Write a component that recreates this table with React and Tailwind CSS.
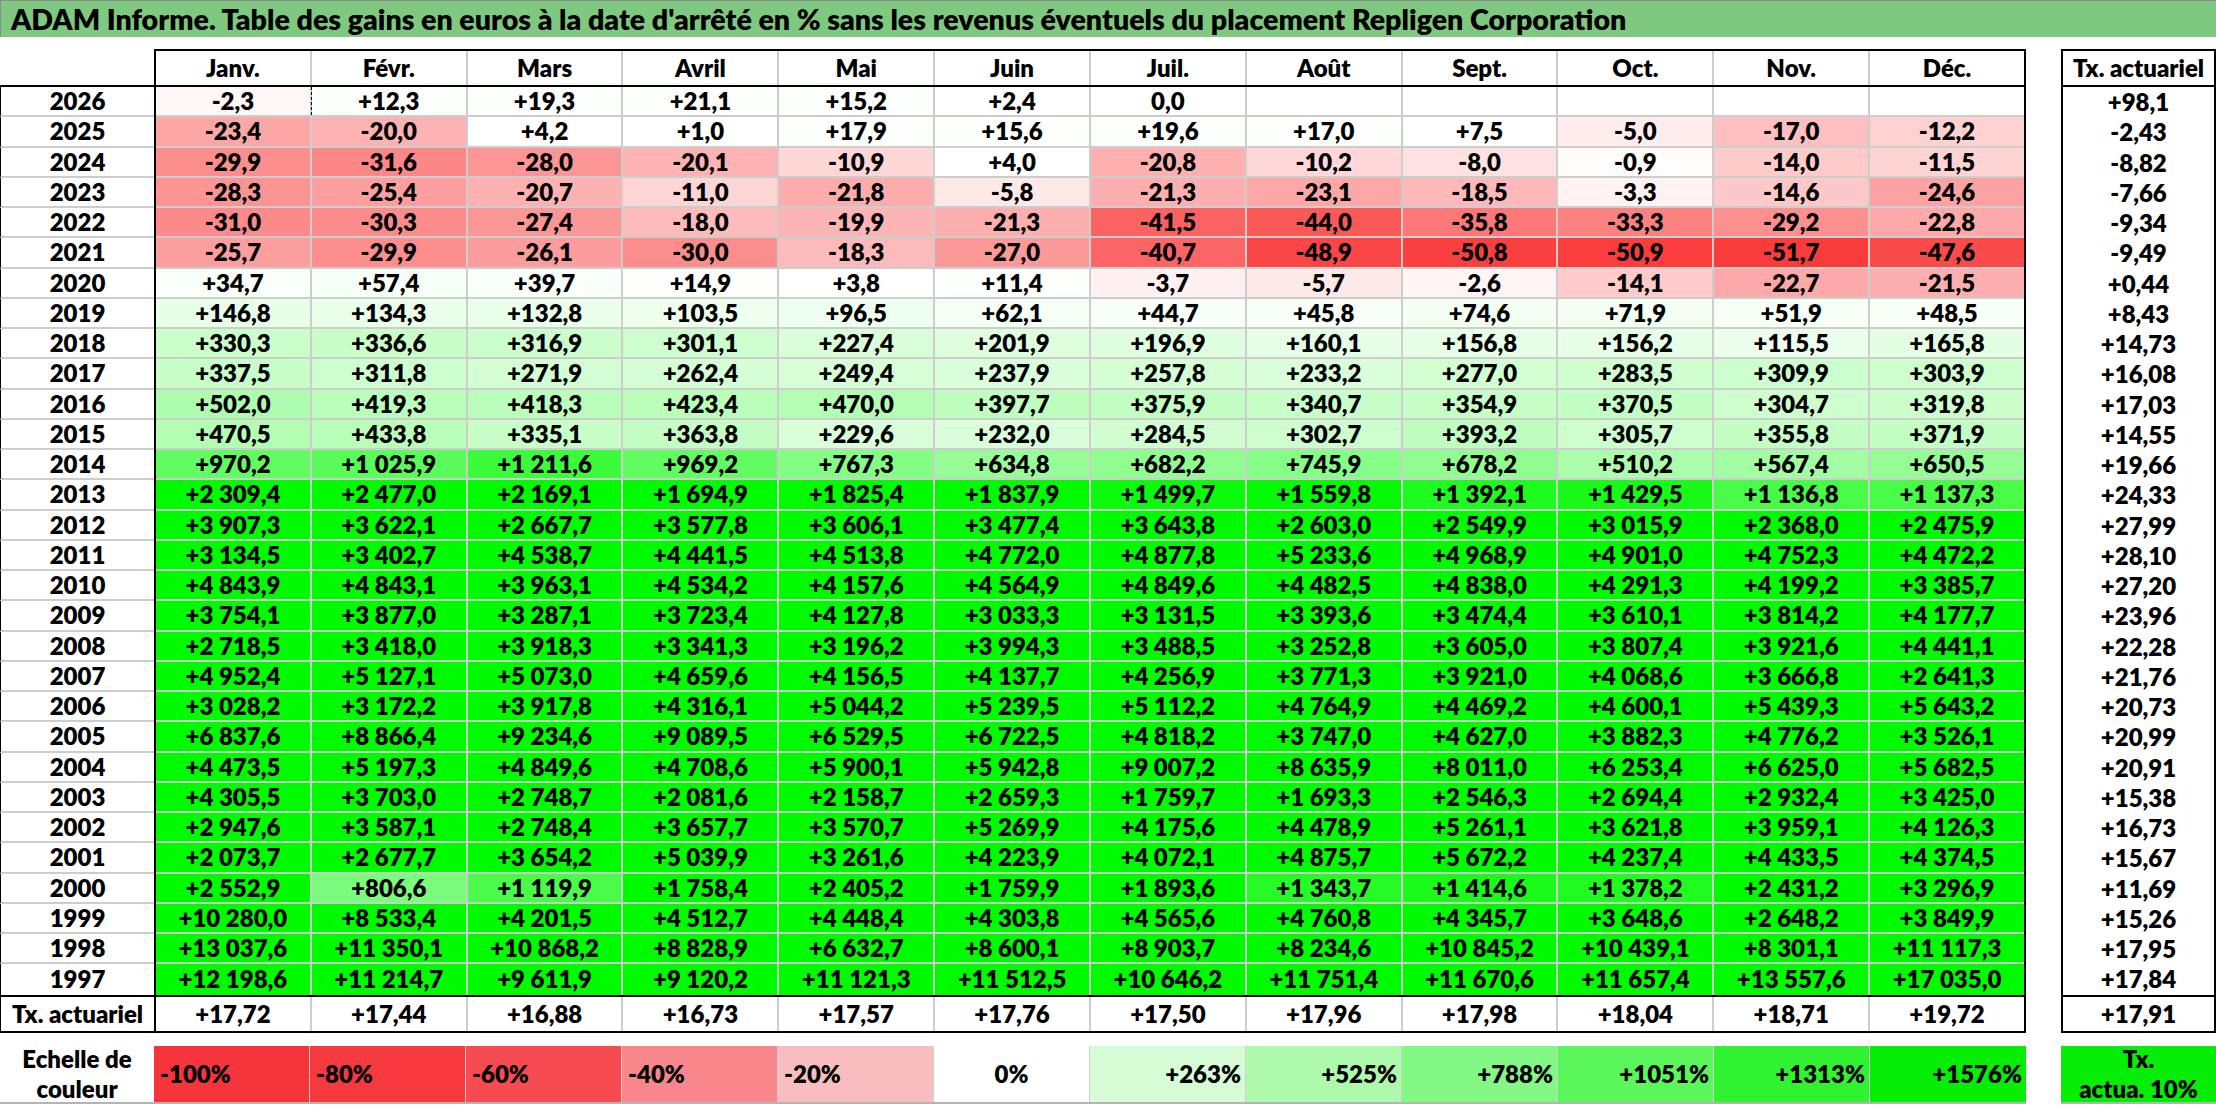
import React from 'react'

const MONTHS = ['Janv.', 'Févr.', 'Mars', 'Avril', 'Mai', 'Juin', 'Juil.', 'Août', 'Sept.', 'Oct.', 'Nov.', 'Déc.']

// année, 12 mois, taux actuariel
const ROWS = [
    ['2026', '-2,3 | +12,3 | +19,3 | +21,1 | +15,2 | +2,4 | 0,0 |  |  |  |  | ', '+98,1'],
    ['2025', '-23,4 | -20,0 | +4,2 | +1,0 | +17,9 | +15,6 | +19,6 | +17,0 | +7,5 | -5,0 | -17,0 | -12,2', '-2,43'],
    ['2024', '-29,9 | -31,6 | -28,0 | -20,1 | -10,9 | +4,0 | -20,8 | -10,2 | -8,0 | -0,9 | -14,0 | -11,5', '-8,82'],
    ['2023', '-28,3 | -25,4 | -20,7 | -11,0 | -21,8 | -5,8 | -21,3 | -23,1 | -18,5 | -3,3 | -14,6 | -24,6', '-7,66'],
    ['2022', '-31,0 | -30,3 | -27,4 | -18,0 | -19,9 | -21,3 | -41,5 | -44,0 | -35,8 | -33,3 | -29,2 | -22,8', '-9,34'],
    ['2021', '-25,7 | -29,9 | -26,1 | -30,0 | -18,3 | -27,0 | -40,7 | -48,9 | -50,8 | -50,9 | -51,7 | -47,6', '-9,49'],
    ['2020', '+34,7 | +57,4 | +39,7 | +14,9 | +3,8 | +11,4 | -3,7 | -5,7 | -2,6 | -14,1 | -22,7 | -21,5', '+0,44'],
    ['2019', '+146,8 | +134,3 | +132,8 | +103,5 | +96,5 | +62,1 | +44,7 | +45,8 | +74,6 | +71,9 | +51,9 | +48,5', '+8,43'],
    ['2018', '+330,3 | +336,6 | +316,9 | +301,1 | +227,4 | +201,9 | +196,9 | +160,1 | +156,8 | +156,2 | +115,5 | +165,8', '+14,73'],
    ['2017', '+337,5 | +311,8 | +271,9 | +262,4 | +249,4 | +237,9 | +257,8 | +233,2 | +277,0 | +283,5 | +309,9 | +303,9', '+16,08'],
    ['2016', '+502,0 | +419,3 | +418,3 | +423,4 | +470,0 | +397,7 | +375,9 | +340,7 | +354,9 | +370,5 | +304,7 | +319,8', '+17,03'],
    ['2015', '+470,5 | +433,8 | +335,1 | +363,8 | +229,6 | +232,0 | +284,5 | +302,7 | +393,2 | +305,7 | +355,8 | +371,9', '+14,55'],
    ['2014', '+970,2 | +1 025,9 | +1 211,6 | +969,2 | +767,3 | +634,8 | +682,2 | +745,9 | +678,2 | +510,2 | +567,4 | +650,5', '+19,66'],
    ['2013', '+2 309,4 | +2 477,0 | +2 169,1 | +1 694,9 | +1 825,4 | +1 837,9 | +1 499,7 | +1 559,8 | +1 392,1 | +1 429,5 | +1 136,8 | +1 137,3', '+24,33'],
    ['2012', '+3 907,3 | +3 622,1 | +2 667,7 | +3 577,8 | +3 606,1 | +3 477,4 | +3 643,8 | +2 603,0 | +2 549,9 | +3 015,9 | +2 368,0 | +2 475,9', '+27,99'],
    ['2011', '+3 134,5 | +3 402,7 | +4 538,7 | +4 441,5 | +4 513,8 | +4 772,0 | +4 877,8 | +5 233,6 | +4 968,9 | +4 901,0 | +4 752,3 | +4 472,2', '+28,10'],
    ['2010', '+4 843,9 | +4 843,1 | +3 963,1 | +4 534,2 | +4 157,6 | +4 564,9 | +4 849,6 | +4 482,5 | +4 838,0 | +4 291,3 | +4 199,2 | +3 385,7', '+27,20'],
    ['2009', '+3 754,1 | +3 877,0 | +3 287,1 | +3 723,4 | +4 127,8 | +3 033,3 | +3 131,5 | +3 393,6 | +3 474,4 | +3 610,1 | +3 814,2 | +4 177,7', '+23,96'],
    ['2008', '+2 718,5 | +3 418,0 | +3 918,3 | +3 341,3 | +3 196,2 | +3 994,3 | +3 488,5 | +3 252,8 | +3 605,0 | +3 807,4 | +3 921,6 | +4 441,1', '+22,28'],
    ['2007', '+4 952,4 | +5 127,1 | +5 073,0 | +4 659,6 | +4 156,5 | +4 137,7 | +4 256,9 | +3 771,3 | +3 921,0 | +4 068,6 | +3 666,8 | +2 641,3', '+21,76'],
    ['2006', '+3 028,2 | +3 172,2 | +3 917,8 | +4 316,1 | +5 044,2 | +5 239,5 | +5 112,2 | +4 764,9 | +4 469,2 | +4 600,1 | +5 439,3 | +5 643,2', '+20,73'],
    ['2005', '+6 837,6 | +8 866,4 | +9 234,6 | +9 089,5 | +6 529,5 | +6 722,5 | +4 818,2 | +3 747,0 | +4 627,0 | +3 882,3 | +4 776,2 | +3 526,1', '+20,99'],
    ['2004', '+4 473,5 | +5 197,3 | +4 849,6 | +4 708,6 | +5 900,1 | +5 942,8 | +9 007,2 | +8 635,9 | +8 011,0 | +6 253,4 | +6 625,0 | +5 682,5', '+20,91'],
    ['2003', '+4 305,5 | +3 703,0 | +2 748,7 | +2 081,6 | +2 158,7 | +2 659,3 | +1 759,7 | +1 693,3 | +2 546,3 | +2 694,4 | +2 932,4 | +3 425,0', '+15,38'],
    ['2002', '+2 947,6 | +3 587,1 | +2 748,4 | +3 657,7 | +3 570,7 | +5 269,9 | +4 175,6 | +4 478,9 | +5 261,1 | +3 621,8 | +3 959,1 | +4 126,3', '+16,73'],
    ['2001', '+2 073,7 | +2 677,7 | +3 654,2 | +5 039,9 | +3 261,6 | +4 223,9 | +4 072,1 | +4 875,7 | +5 672,2 | +4 237,4 | +4 433,5 | +4 374,5', '+15,67'],
    ['2000', '+2 552,9 | +806,6 | +1 119,9 | +1 758,4 | +2 405,2 | +1 759,9 | +1 893,6 | +1 343,7 | +1 414,6 | +1 378,2 | +2 431,2 | +3 296,9', '+11,69'],
    ['1999', '+10 280,0 | +8 533,4 | +4 201,5 | +4 512,7 | +4 448,4 | +4 303,8 | +4 565,6 | +4 760,8 | +4 345,7 | +3 648,6 | +2 648,2 | +3 849,9', '+15,26'],
    ['1998', '+13 037,6 | +11 350,1 | +10 868,2 | +8 828,9 | +6 632,7 | +8 600,1 | +8 903,7 | +8 234,6 | +10 845,2 | +10 439,1 | +8 301,1 | +11 117,3', '+17,95'],
    ['1997', '+12 198,6 | +11 214,7 | +9 611,9 | +9 120,2 | +11 121,3 | +11 512,5 | +10 646,2 | +11 751,4 | +11 670,6 | +11 657,4 | +13 557,6 | +17 035,0', '+17,84'],
].map(([year, cells, tx]) => ({ year, cells: cells.split('|').map(s => s.trim()), tx }))

const TOTALS = ['+17,72', '+17,44', '+16,88', '+16,73', '+17,57', '+17,76', '+17,50', '+17,96', '+17,98', '+18,04', '+18,71', '+19,72']

const LEGEND = [
    { label: '-100%', bg: '#f6343c', align: 'justify-start pl-[6px]' },
    { label: '-80%', bg: '#f6383f', align: 'justify-start pl-[6px]' },
    { label: '-60%', bg: '#f64b51', align: 'justify-start pl-[6px]' },
    { label: '-40%', bg: '#f8868a', align: 'justify-start pl-[6px]' },
    { label: '-20%', bg: '#fabdbf', align: 'justify-start pl-[6px]' },
    { label: '0%', bg: '#ffffff', align: 'justify-center' },
    { label: '+263%', bg: '#d6fcd6', align: 'justify-end pr-[4px]' },
    { label: '+525%', bg: '#adfaad', align: 'justify-end pr-[4px]' },
    { label: '+788%', bg: '#84f884', align: 'justify-end pr-[4px]' },
    { label: '+1051%', bg: '#5af65a', align: 'justify-end pr-[4px]' },
    { label: '+1313%', bg: '#30f230', align: 'justify-end pr-[4px]' },
    { label: '+1576%', bg: '#06ee06', align: 'justify-end pr-[4px]' },
]

// échelle de couleur : rouge jusqu'au pire mois, vert plein à +1576
function cellColor(text) {
    if (!text) return '#ffffff'
    const v = parseFloat(text.replace(/\s/g, '').replace(',', '.'))
    if (!v) return '#ffffff'
    if (v < 0) {
        const t = Math.min(1, -v / 52)
        const gb = Math.round(255 - 197 * t)
        return `rgb(${Math.round(255 - 5 * t)},${gb},${gb})`
    }
    const t = Math.min(1, v / 1576)
    const rb = Math.round(255 * (1 - t))
    return `rgb(${rb},${Math.round(255 - 5 * t)},${rb})`
}

export default function App() {
    return (
        <div className="w-[2216px] h-[1105px] bg-white text-black font-extrabold text-[24px] font-['Lato','Liberation_Sans',sans-serif] overflow-hidden">
            <div className="h-[37px] bg-[#7fc87f] border-t border-l border-[#8a8a8a] pl-[10px] flex items-center text-[28.6px] whitespace-nowrap">
                ADAM Informe. Table des gains en euros à la date d'arrêté en % sans les revenus éventuels du placement Repligen Corporation
            </div>

            <div className="flex mt-[12px]">
                {/* tableau principal */}
                <div className="w-[2026px]">
                    <div className="flex h-[38px]">
                        <div className="w-[154px] border-b-2 border-black"></div>
                        <div className="w-[1872px] flex border-2 border-black">
                            {MONTHS.map(m => (
                                <div key={m} className="flex-1 flex items-center justify-center border-r-2 border-[#cdcdcd] last:border-r-0">{m}</div>
                            ))}
                        </div>
                    </div>

                    {ROWS.map((row, i) => (
                        <div key={row.year} className="flex h-[30.25px]">
                            <div className={`w-[154px] flex items-center justify-center border-l border-l-black ${i < ROWS.length - 1 ? 'border-b-2 border-b-[#cdcdcd]' : ''}`}>{row.year}</div>
                            <div className="w-[1872px] flex border-x-2 border-black">
                                {row.cells.map((c, j) => (
                                    <div
                                        key={j}
                                        className={`relative flex-1 flex items-center justify-center border-r-2 border-r-[#cdcdcd] last:border-r-0 ${i < ROWS.length - 1 ? 'border-b-2 border-b-[#cdcdcd]' : ''}`}
                                        style={{ backgroundColor: cellColor(c) }}
                                    >
                                        {c}
                                        {i === 0 && j === 0 && (
                                            <span className="absolute right-[-2px] top-0 bottom-0 border-l border-dashed border-black"></span>
                                        )}
                                    </div>
                                ))}
                            </div>
                        </div>
                    ))}

                    <div className="flex h-[38px]">
                        <div className="w-[154px] flex items-center justify-center border-l border-y-2 border-black whitespace-nowrap">Tx. actuariel</div>
                        <div className="w-[1872px] flex border-2 border-black">
                            {TOTALS.map((t, j) => (
                                <div key={j} className="flex-1 flex items-center justify-center border-r-2 border-[#cdcdcd] last:border-r-0">{t}</div>
                            ))}
                        </div>
                    </div>
                </div>

                {/* colonne taux actuariel */}
                <div className="w-[155px] ml-[35px]">
                    <div className="h-[38px] flex items-center justify-center border-2 border-black whitespace-nowrap">Tx. actuariel</div>
                    <div className="border-x-2 border-black">
                        {ROWS.map(row => (
                            <div key={row.year} className="h-[30.25px] flex items-center justify-center">{row.tx}</div>
                        ))}
                    </div>
                    <div className="h-[38px] flex items-center justify-center border-2 border-black">+17,91</div>
                </div>
            </div>

            {/* échelle de couleur */}
            <div className="flex mt-[13px] h-[58px]">
                <div className="flex w-[2026px] border-b-2 border-[#b4b4b4]">
                    <div className="w-[154px] flex flex-col items-center justify-center leading-[30px] bg-white">
                        <span>Echelle de</span>
                        <span>couleur</span>
                    </div>
                    {LEGEND.map(l => (
                        <div key={l.label} className={`w-[156px] flex items-center ${l.align} border-r border-[#d0d0d0] last:border-r-0`} style={{ backgroundColor: l.bg }}>
                            {l.label}
                        </div>
                    ))}
                </div>
                <div className="w-[155px] ml-[35px] flex flex-col items-center justify-center leading-[30px] bg-[#06ee06] border-b-2 border-[#b4b4b4]">
                    <span>Tx.</span>
                    <span>actua. 10%</span>
                </div>
            </div>
        </div>
    )
}
